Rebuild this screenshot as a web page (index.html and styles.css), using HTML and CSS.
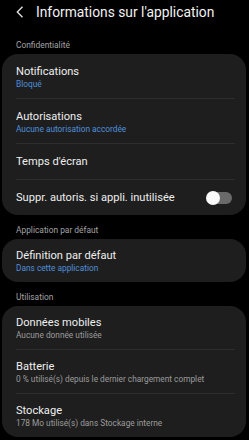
FILE: index.html
```html
<!DOCTYPE html>
<html lang="fr">
<head>
<meta charset="utf-8">
<link rel="stylesheet" href="styles.css">
</head>
<body>
<header class="topbar">
  <svg class="back" width="8" height="12" viewBox="0 0 8 12"><path d="M6.5 0.8 L1.3 6 L6.5 11.2" fill="none" stroke="#e6e6e6" stroke-width="1.3"/></svg>
  <h1 class="title">Informations sur l'application</h1>
</header>

<div class="section-label first">Confidentialité</div>
<div class="card privacy">
  <div class="row">
    <div class="row-title">Notifications</div>
    <div class="row-sub blue">Bloqué</div>
  </div>
  <div class="divider"></div>
  <div class="row">
    <div class="row-title">Autorisations</div>
    <div class="row-sub blue">Aucune autorisation accordée</div>
  </div>
  <div class="divider"></div>
  <div class="row single">
    <div class="row-title">Temps d'écran</div>
  </div>
  <div class="divider"></div>
  <div class="row single toggle-row">
    <div class="row-title">Suppr. autoris. si appli. inutilisée</div>
    <div class="toggle"><span class="knob"></span></div>
  </div>
</div>

<div class="section-label">Application par défaut</div>
<div class="card">
  <div class="row">
    <div class="row-title">Définition par défaut</div>
    <div class="row-sub blue">Dans cette application</div>
  </div>
</div>

<div class="section-label">Utilisation</div>
<div class="card">
  <div class="row">
    <div class="row-title">Données mobiles</div>
    <div class="row-sub">Aucune donnée utilisée</div>
  </div>
  <div class="divider"></div>
  <div class="row">
    <div class="row-title">Batterie</div>
    <div class="row-sub">0 % utilisé(s) depuis le dernier chargement complet</div>
  </div>
  <div class="divider"></div>
  <div class="row">
    <div class="row-title">Stockage</div>
    <div class="row-sub">178 Mo utilisé(s) dans Stockage interne</div>
  </div>
</div>
</body>
</html>
```

FILE: styles.css
```css
* { box-sizing: border-box; }
html, body {
  margin: 0;
  padding: 0;
  background: #000;
  font-family: Roboto, "Liberation Sans", sans-serif;
  color: #ececec;
  overflow: hidden;
}
.topbar {
  height: 24px;
  display: flex;
  align-items: center;
  padding-left: 16px;
}
.back { display: block; flex: none; }
.title {
  margin: 0 0 0 12px;
  font-size: 13.8px;
  font-weight: 400;
  color: #f2f2f2;
  line-height: 18px;
  white-space: nowrap;
}
.section-label {
  font-size: 8.4px;
  line-height: 10px;
  color: #a3a3a3;
  padding: 10px 16px 4px;
}
.section-label.first { padding-top: 16px; padding-bottom: 4px; }
.card {
  background: #1e1e1e;
  border-radius: 16px;
  margin: 0 3px 0 2px;
}
.row {
  padding: 9px 14px 8px;
}
.privacy .row {
  padding: 10px 14px 8px;
}
.privacy .row.single,
.row.single {
  padding: 10px 14px;
}
.row-title {
  font-size: 11.1px;
  line-height: 15px;
  color: #efefef;
  white-space: nowrap;
}
.row-sub {
  font-size: 8.3px;
  line-height: 11px;
  color: #9c9c9c;
  white-space: nowrap;
}
.row-sub.blue { color: #4f8fdc; }
.divider {
  height: 1px;
  background: #2e2e2e;
  margin: 0 11px 0 14px;
}
.toggle-row {
  display: flex;
  align-items: center;
  justify-content: space-between;
}
.toggle {
  position: relative;
  width: 25px;
  height: 12px;
  border-radius: 6px;
  background: #6a6a6a;
}
.knob {
  position: absolute;
  left: -1px;
  top: -1px;
  width: 14px;
  height: 14px;
  border-radius: 50%;
  background: #fafafa;
}
```
